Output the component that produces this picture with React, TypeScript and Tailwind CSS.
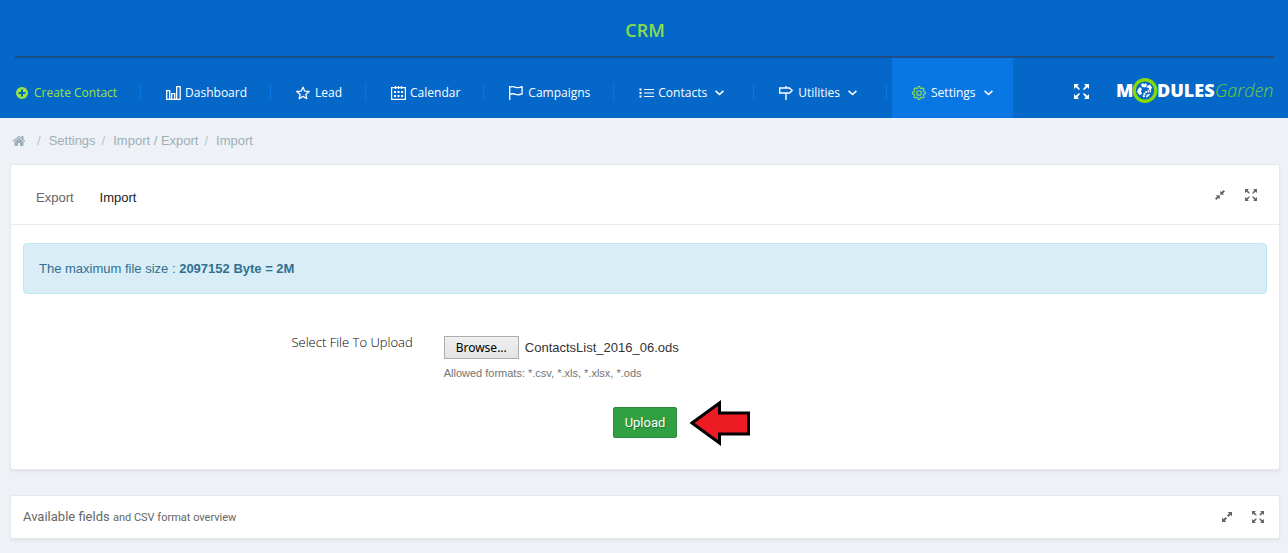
import React, { useRef, useState } from 'react';

interface IconProps {
    className?: string;
}

interface NavItem {
    label: string;
    icon: React.ReactNode;
    hasMenu?: boolean;
}

// Icons
const PlusCircleIcon = ({ className }: IconProps) => (
    <svg viewBox="0 0 12 12" className={className} aria-hidden="true">
        <path fill="currentColor" fillRule="evenodd" d="M6 0a6 6 0 1 1 0 12A6 6 0 0 1 6 0ZM5 2.5V5H2.5v2H5v2.5h2V7h2.5V5H7V2.5Z" />
    </svg>
);

const BarsIcon = () => (
    <svg viewBox="0 0 15 14" className="w-[15px] h-[14px]" fill="none" stroke="currentColor" strokeWidth="1.3" aria-hidden="true">
        <path d="M.7 4.7h3v8.6h-3zM5.7 7.7h3v5.6h-3zM10.7.7h3.5v12.6h-3.5zM.7 13.3h13.5" />
    </svg>
);

const StarIcon = () => (
    <svg viewBox="0 0 15 14" className="w-[15px] h-[14px]" fill="none" stroke="currentColor" strokeWidth="1.3" strokeLinejoin="round" aria-hidden="true">
        <path d="m7 1.2 1.7 3.9 4.5.4-3.4 2.9 1 4.3L7 10.4l-3.8 2.3 1-4.3L.8 5.5l4.5-.4z" />
    </svg>
);

const CalendarIcon = () => (
    <svg viewBox="0 0 15 14" className="w-[15px] h-[14px]" fill="none" stroke="currentColor" strokeWidth="1.2" aria-hidden="true">
        <path d="M.6 1.6h13.8v11.8H.6zM4.5 0v3M7.5 0v3M10.5 0v3" />
        <path strokeWidth="2" strokeDasharray="2 1.5" d="M3 6h9.5M3 10h9.5" />
    </svg>
);

const FlagIcon = () => (
    <svg viewBox="0 0 15 14" className="w-[15px] h-[14px]" fill="none" stroke="currentColor" strokeWidth="1.3" aria-hidden="true">
        <path d="M.7 0v14M.7 1.2c2.5-.8 4.2-.6 6 .1s3.8.6 6.4-.6v7.2c-2.600 1-4.600 1.100-6.400.4s-3.500-.8-6 0" />
    </svg>
);

const ListIcon = () => (
    <svg viewBox="0 0 15 10" className="w-[15px] h-[10px]" fill="none" stroke="currentColor" aria-hidden="true">
        <path strokeWidth="1.2" d="M5 1.5h10M5 5h10M5 8.5h10" />
        <path strokeWidth="2" d="M.5 1.5h2M.5 5h2M.5 8.5h2" />
    </svg>
);

const SignIcon = () => (
    <svg viewBox="0 0 15 14" className="w-[15px] h-[14px]" fill="none" stroke="currentColor" strokeWidth="1.4" aria-hidden="true">
        <path d="M.7 2h9.8l2.600 2.500L10.500 7H.7zM7 0v2M7 7v7" />
    </svg>
);

const GearIcon = () => (
    <svg viewBox="0 0 15 14" className="w-[15px] h-[14px] text-[#8fdc50]" fill="none" stroke="currentColor" strokeWidth="1.1" aria-hidden="true">
        <path
            strokeLinejoin="round"
            d="M6.100.6h1.800l.4 1.700 1 .4 1.500-.9 1.300 1.300-.9 1.500.4 1 1.800.4v1.900l-1.800.4-.4 1 .9 1.500-1.300 1.300-1.500-.9-1 .4-.4 1.800H6.100l-.4-1.800-1-.4-1.500.9-1.300-1.300.9-1.500-.4-1L.6 7.900V6l1.800-.4.4-1-.9-1.500 1.300-1.300 1.500.9 1-.4z"
        />
        <circle cx="7" cy="7" r="2.3" />
    </svg>
);

const ChevronIcon = () => (
    <svg viewBox="0 0 9 6" className="ml-1 w-[9px] h-[6px]" fill="none" stroke="currentColor" strokeWidth="1.6" aria-hidden="true">
        <path d="m.6.8 3.900 3.700L8.400.8" />
    </svg>
);

const ExpandIcon = ({ className }: IconProps) => (
    <svg viewBox="0 0 15 15" className={className} aria-hidden="true">
        <path fill="currentColor" d="M0 0h5L3.300 1.700 6 5 5 6 1.700 3.300 0 5zM15 0v5l-1.700-1.700L10 6 9 5l2.700-3.300L10 0zM0 15v-5l1.700 1.700L5 9l1 1-2.700 3.300L5 15zM15 15h-5l1.700-1.700L9 10l1-1 3.300 2.700L15 10z" />
    </svg>
);

const CompressIcon = () => (
    <svg viewBox="0 0 10 10" className="w-[10px] h-[10px]" aria-hidden="true">
        <path fill="currentColor" d="M5.2 4.8V.8l1.300 1.300L8.600 0 10 1.400 7.900 3.500l1.300 1.300zM4.800 5.200v4L3.500 7.900 1.400 10 0 8.600l2.100-2.100L.8 5.200z" />
    </svg>
);

const EnlargeIcon = () => (
    <svg viewBox="0 0 10 10" className="w-[10px] h-[10px]" aria-hidden="true">
        <path fill="currentColor" d="M10 0v4.300L8.600 2.900 6.400 5.100 4.900 3.600l2.200-2.200L5.700 0zM0 10V5.700l1.400 1.400 2.200-2.200 1.500 1.500-2.200 2.200L4.300 10z" />
    </svg>
);

const HomeIcon = () => (
    <svg viewBox="0 0 1792 1792" className="w-[14px] h-[14px]" aria-hidden="true">
        <path
            fill="currentColor"
            d="M1472 992v480q0 26-19 45t-45 19h-384v-384h-256v384h-384q-26 0-45-19t-19-45v-480q0-1 .5-3t.5-3l575-474 575 474q1 2 1 6zm223-69l-62 74q-8 9-21 11h-3q-13 0-21-7l-692-577-692 577q-12 8-24 7-13-2-21-11l-62-74q-8-10-7-23.5t11-21.5l719-599q32-26 76-26t76 26l244 204v-195q0-14 9-23t23-9h192q14 0 23 9t9 23v408l219 182q10 8 11 21.5t-7 23.5z"
        />
    </svg>
);

const Logo = () => (
    <svg viewBox="0 0 158 28" className="w-[158px] h-7" role="img" aria-label="ModulesGarden">
        <text x="-1" y="20" fill="#fff" fontFamily="'Open Sans', sans-serif" fontWeight="800" fontSize="18">M</text>
        <text x="40" y="20" fill="#fff" fontFamily="'Open Sans', sans-serif" fontWeight="800" fontSize="18">DULES</text>
        <text x="98" y="20" fill="#6ccf2c" fontFamily="'Open Sans', sans-serif" fontWeight="300" fontStyle="italic" fontSize="18">Garden</text>
        <circle cx="28" cy="13.5" r="10.8" fill="#0568c8" stroke="#84d90a" strokeWidth="3.4" />
        <path fill="#fff" d="M24 7.500l2-1.500 1 1.500 2-1.500 1 2.500-2 2-3-.5zM30 9l3-1.500 2 3-1.500 3-2-.5.5-2-2.500-.5zM21 12l2-2 2 2-1 2 1 3-2.500 1L20 15z" />
        <path fill="none" stroke="#fff" strokeWidth="2.2" strokeDasharray="1.7 .7" d="M27 20c-.5-4 2.500-6.500 7-5.500" />
        <path fill="#fff" d="M29 20.500c0-2.500 1.500-4 4-3.500-.8 1.800-2 3-4 3.500z" />
    </svg>
);

const ArrowMarker = () => (
    <svg viewBox="0 0 62 46" className="absolute left-full top-1/2 ml-3 w-[62px] h-[46px] -translate-y-1/2" aria-hidden="true">
        <path fill="#ed1c24" stroke="#000" strokeWidth="3" d="M3 23 30.500 3v10H59.500v21H30.500v9z" />
    </svg>
);

const NAV_ITEMS: NavItem[] = [
    { label: 'Dashboard', icon: <BarsIcon /> },
    { label: 'Lead', icon: <StarIcon /> },
    { label: 'Calendar', icon: <CalendarIcon /> },
    { label: 'Campaigns', icon: <FlagIcon /> },
    { label: 'Contacts', icon: <ListIcon />, hasMenu: true },
    { label: 'Utilities', icon: <SignIcon />, hasMenu: true },
];

const BREADCRUMBS = ['Settings', 'Import / Export', 'Import'];

const Separator = () => <span className="ml-[3px] mr-[5px] mt-2 h-[18px] w-px shrink-0 bg-[#0877e3]" />;

function Header() {
    return (
        <header className="bg-[#0568c8] pr-[13px] pl-[15px] font-['Open_Sans',sans-serif]">
            <h1 className="border-b-2 border-[#1d4f86] pt-[18px] pb-[14px] text-center text-[18px] leading-6 font-semibold text-[#8add4a]">CRM</h1>
            <nav className="flex h-[60px] items-stretch text-[12px] text-white">
                <ul className="flex items-stretch">
                    <li className="flex items-center">
                        <a href="#create" className="flex h-full items-center gap-[6px] pt-[10px] pr-5 pl-px text-[#9be33f]">
                            <PlusCircleIcon className="w-3 h-3" />
                            Create Contact
                        </a>
                        <Separator />
                    </li>
                    {NAV_ITEMS.map((item) => (
                        <li key={item.label} className="flex items-center">
                            <a
                                href={`#${item.label.toLowerCase()}`}
                                className={`flex h-full items-center gap-1 pt-[10px] pl-5 ${item.hasMenu ? 'pr-[26px]' : 'pr-5'}`}
                            >
                                {item.icon}
                                {item.label}
                                {item.hasMenu && <ChevronIcon />}
                            </a>
                            <Separator />
                        </li>
                    ))}
                    <li className="flex items-center bg-[#0877e3]">
                        <a href="#settings" className="flex h-full items-center gap-1 px-5 pt-[10px]">
                            <GearIcon />
                            Settings
                            <ChevronIcon />
                        </a>
                    </li>
                </ul>
                <div className="ml-auto flex items-center gap-7 pt-[6px]">
                    <button type="button" aria-label="Full screen">
                        <ExpandIcon className="w-[15px] h-[15px]" />
                    </button>
                    <a href="#home">
                        <Logo />
                    </a>
                </div>
            </nav>
        </header>
    );
}

export default function App() {
    const fileInput = useRef<HTMLInputElement>(null);
    const [fileName, setFileName] = useState('ContactsList_2016_06.ods');

    return (
        <div className="min-h-screen bg-[#eef1f6] font-['Liberation_Sans',Arial,sans-serif] text-[13px] leading-5 text-[#333]">
            <Header />

            {/* Breadcrumbs */}
            <nav aria-label="Breadcrumb" className="px-3 py-[13px] text-[#9cb0b8]">
                <ol className="flex items-center">
                    <li>
                        <a href="#home" aria-label="Home" className="mr-[5px] block">
                            <HomeIcon />
                        </a>
                    </li>
                    {BREADCRUMBS.map((crumb) => (
                        <li key={crumb} className="flex">
                            <span className="px-[6px] text-[#b5c3c9]">/</span>
                            <a href="#crumb" className="pl-[2px]">{crumb}</a>
                        </li>
                    ))}
                </ol>
            </nav>

            <main className="pr-2 pl-[10px]">
                {/* Import panel */}
                <section className="rounded-xs border border-[#e3e8ec] bg-white shadow-[0_2px_2px_#e1e5ea]">
                    <div className="flex h-[60px] items-center border-b border-[#e9ecee] pl-[25px] pr-[22px]">
                        <a href="#export" className="mt-[6px] mr-[26px] text-[#666]">Export</a>
                        <a href="#import" className="mt-[6px] text-[#222]">Import</a>
                        <div className="ml-auto flex items-center gap-5 text-[#666]">
                            <button type="button" aria-label="Collapse panel">
                                <CompressIcon />
                            </button>
                            <button type="button" aria-label="Expand panel">
                                <ExpandIcon className="w-3 h-3" />
                            </button>
                        </div>
                    </div>
                    <div className="px-3 pt-[18px] pb-[31px]">
                        <div className="rounded-sm border border-[#bce8f1] bg-[#d9edf7] px-[15px] pt-[15px] pb-[14px] text-[#31708f]">
                            The maximum file size : <strong>2097152 Byte = 2M</strong>
                        </div>

                        <form className="pt-[38px]">
                            <div className="flex">
                                <label htmlFor="import-file" className="w-1/3 pr-[25px] text-right font-['Open_Sans',sans-serif] font-light text-black">
                                    Select File To Upload
                                </label>
                                <div className="pl-[6px]">
                                    <div className="mt-1 flex items-center gap-[6px]">
                                        <input
                                            ref={fileInput}
                                            id="import-file"
                                            type="file"
                                            accept=".csv,.xls,.xlsx,.ods"
                                            className="hidden"
                                            onChange={(e) => setFileName(e.target.files?.[0]?.name ?? fileName)}
                                        />
                                        <button
                                            type="button"
                                            onClick={() => fileInput.current?.click()}
                                            className="h-[23px] border border-[#adadad] bg-linear-to-b from-[#f0f0f0] to-[#e3e3e3] px-[11px] font-['Noto_Sans',sans-serif] text-[12px] leading-5 text-black"
                                        >
                                            Browse...
                                        </button>
                                        <span>{fileName}</span>
                                    </div>
                                    <p className="mt-1 text-[11px] text-[#737373]">Allowed formats: *.csv, *.xls, *.xlsx, *.ods</p>
                                </div>
                            </div>
                            <div className="mt-6 flex justify-center">
                                <div className="relative">
                                    <button
                                        type="submit"
                                        className="block h-[31px] rounded-xs border border-[#2c8a3a] bg-[#31a043] px-[11px] font-[Roboto,sans-serif] text-[13px] leading-5 text-white text-shadow-[1px_1px_0_#1f7a2e]"
                                    >
                                        Upload
                                    </button>
                                    <ArrowMarker />
                                </div>
                            </div>
                        </form>
                    </div>
                </section>

                {/* Available fields */}
                <section className="mt-[25px] flex h-11 items-center rounded-xs border border-[#e3e8ec] bg-white pr-[15px] pl-3 text-[#666] shadow-[0_2px_2px_#e1e5ea]">
                    <h2 className="font-[Roboto,sans-serif]">
                        Available fields <small className="text-[11px]">and CSV format overview</small>
                    </h2>
                    <div className="ml-auto flex items-center gap-5">
                        <button type="button" aria-label="Open panel">
                            <EnlargeIcon />
                        </button>
                        <button type="button" aria-label="Expand panel">
                            <ExpandIcon className="w-3 h-3" />
                        </button>
                    </div>
                </section>
            </main>
        </div>
    );
}
